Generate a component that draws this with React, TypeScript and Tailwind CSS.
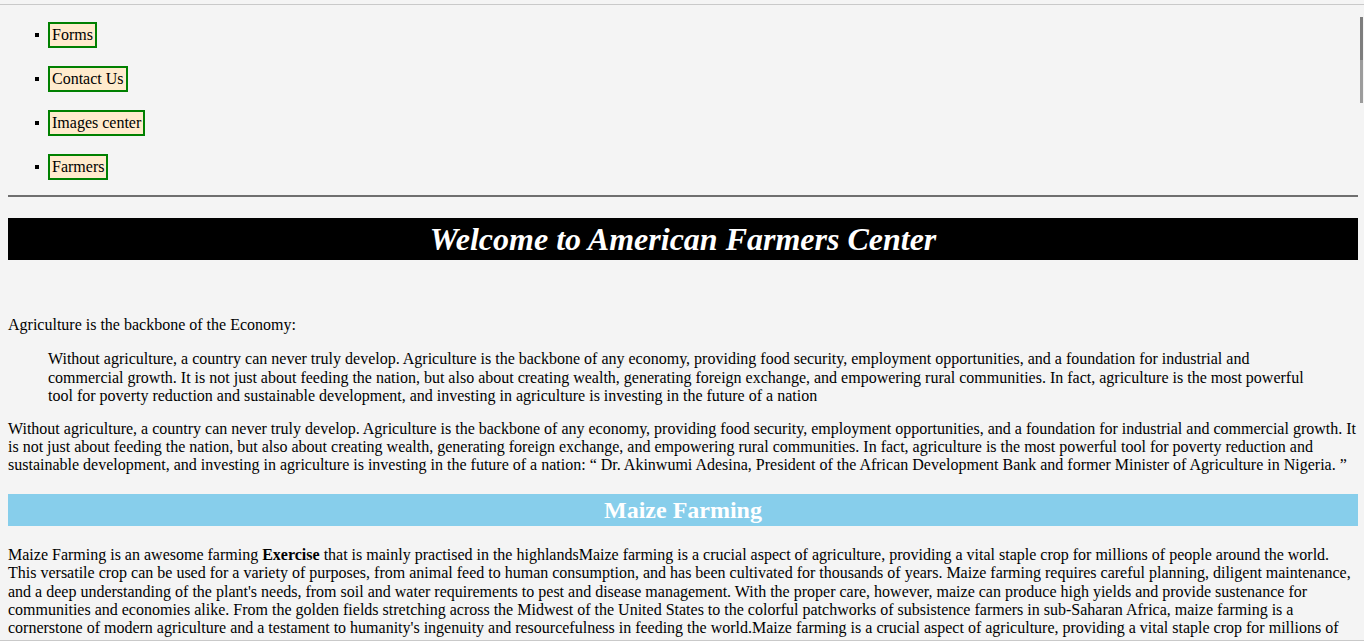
import React from "react";

const serif = { fontFamily: '"Liberation Serif", "Times New Roman", serif' };

const navItems = ["Forms", "Contact Us", "Images center", "Farmers"];

const quote =
  "Without agriculture, a country can never truly develop. Agriculture is the backbone of any economy, providing food security, employment opportunities, and a foundation for industrial and commercial growth. It is not just about feeding the nation, but also about creating wealth, generating foreign exchange, and empowering rural communities. In fact, agriculture is the most powerful tool for poverty reduction and sustainable development, and investing in agriculture is investing in the future of a nation";

const maizeRest =
  " that is mainly practised in the highlandsMaize farming is a crucial aspect of agriculture, providing a vital staple crop for millions of people around the world. This versatile crop can be used for a variety of purposes, from animal feed to human consumption, and has been cultivated for thousands of years. Maize farming requires careful planning, diligent maintenance, and a deep understanding of the plant's needs, from soil and water requirements to pest and disease management. With the proper care, however, maize can produce high yields and provide sustenance for communities and economies alike. From the golden fields stretching across the Midwest of the United States to the colorful patchworks of subsistence farmers in sub-Saharan Africa, maize farming is a cornerstone of modern agriculture and a testament to humanity's ingenuity and resourcefulness in feeding the world.Maize farming is a crucial aspect of agriculture, providing a vital staple crop for millions of people around the world. This versatile crop can be used for a variety of purposes, from animal feed to human consumption, and has been cultivated for thousands of years. Maize farming requires careful planning, diligent maintenance, and a deep understanding of the plant's needs, from soil and water requirements to pest and disease management.";

export default function App() {
  return (
    <div
      className="relative h-[641px] w-[1364px] overflow-hidden bg-[#f4f4f4] text-[16px] leading-[18.4px] text-black"
      style={serif}
    >
      <div className="h-[4px]" />
      <div className="h-[1px] bg-[#c9c9c9]" />
      <div className="ml-2 w-[1350px]">
        <ul className="mt-[17px] flex flex-col gap-[18px] pl-[27px]">
          {navItems.map((item) => (
            <li key={item} className="flex h-[26px] items-center">
              <span className="mr-[9px] h-[4px] w-[4px] bg-black" />
              <a className="flex h-[26px] items-center border-2 border-[#008000] bg-[#ffebcd] px-[2px] text-black">
                {item}
              </a>
            </li>
          ))}
        </ul>
        <div className="mt-[15px] h-[2px] bg-[#6f6f6f]" />
        <h1 className="mt-[21px] flex h-[42px] items-center justify-center bg-black text-[32px] font-bold italic leading-[37px] text-white">
          Welcome to American Farmers Center
        </h1>
        <p className="mt-[56px]">Agriculture is the backbone of the Economy:</p>
        <blockquote className="mx-[40px] mt-[16px]">{quote}</blockquote>
        <p className="mt-[14px]">
          {quote}: “ Dr. Akinwumi Adesina, President of the African Development Bank and former Minister of
          Agriculture in Nigeria. ”
        </p>
        <h2 className="mt-[19px] flex h-[32px] items-center justify-center bg-[#87ceeb] text-[24px] font-bold leading-[28px] text-white">
          Maize Farming
        </h2>
        <p className="mt-[20px]">
          Maize Farming is an awesome farming <b>Exercise</b>
          {maizeRest}
        </p>
      </div>
      <div className="absolute right-[1px] top-[17px] flex w-[3px] flex-col">
        <div className="h-[43px] bg-[#7d7d7d]" />
        <div className="h-[43px] bg-[#9c9c9c]" />
      </div>
      <div className="absolute bottom-0 left-0 h-[1px] w-full bg-[#c9c9c9]" />
    </div>
  );
}
